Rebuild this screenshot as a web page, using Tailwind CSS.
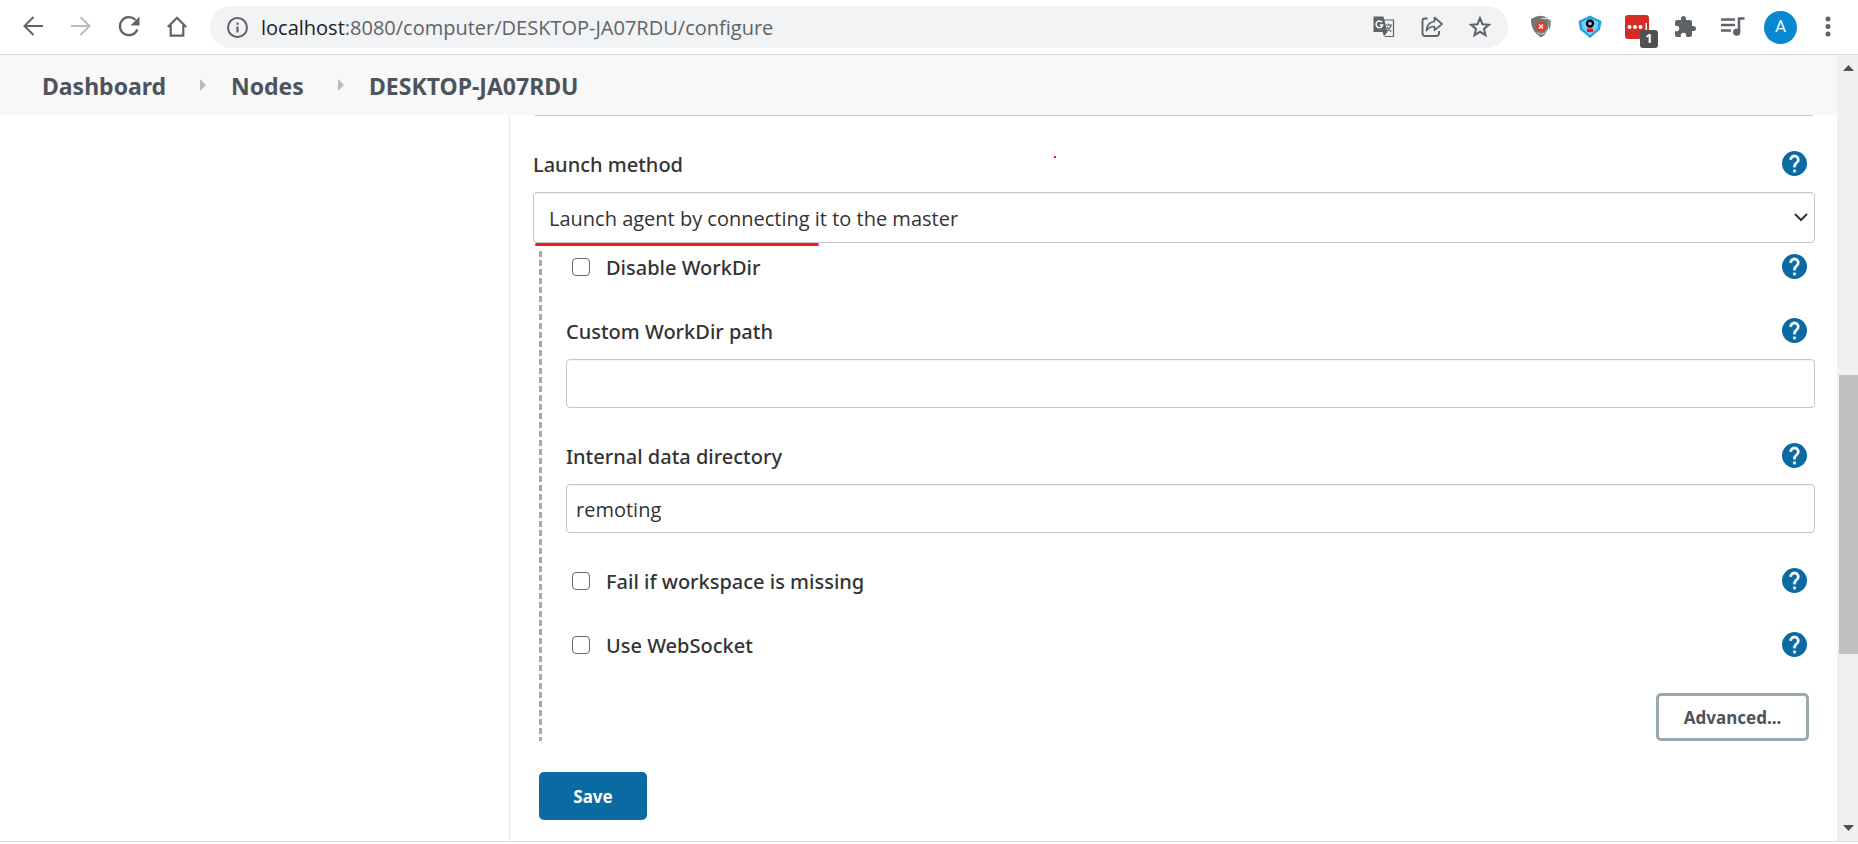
<!DOCTYPE html>
<html lang="en">
<head>
<meta charset="utf-8">
<meta name="viewport" content="width=device-width, initial-scale=1">
<title>DESKTOP-JA07RDU configuration</title>
<script src="https://cdn.jsdelivr.net/npm/@tailwindcss/browser@4"></script>
</head>
<body class="flex h-screen flex-col overflow-hidden bg-white font-['Noto_Sans',sans-serif] text-[20px] text-[#333]">
<svg class="hidden">
  <symbol id="help" viewBox="2 2 20 20">
    <circle cx="12" cy="12" r="10" fill="#0b6aa2"/>
    <path d="M13 19h-2v-2h2v2zm2.070-7.750l-.9.920C13.450 12.900 13 13.500 13 15h-2v-.5c0-1.100.450-2.100 1.170-2.830l1.240-1.260c.370-.360.590-.860.590-1.410 0-1.100-.9-2-2-2s-2 .9-2 2H8c0-2.210 1.790-4 4-4s4 1.790 4 4c0 .880-.360 1.680-.930 2.250z" fill="#fff" stroke="#fff" stroke-width=".2"/>
  </symbol>
  <symbol id="crumb" viewBox="0 0 6 12"><path d="M0 0l6 6-6 6z" fill="#bbb"/></symbol>
</svg>

<header class="flex h-[55px] shrink-0 items-start border-b border-[#d8d9db] bg-white pt-[6px] text-[#5f6368]">
  <nav class="flex h-[42px] w-[210px] shrink-0 items-center gap-6 pl-[21px]" aria-label="Browser">
    <button aria-label="Back"><svg class="size-6" viewBox="0 0 24 24" fill="none" stroke="currentColor" stroke-width="2"><path d="M22 11H4M12.500 2L3.500 11l9 9"/></svg></button>
    <button aria-label="Forward" class="text-[#babcbe]"><svg class="size-6" viewBox="0 0 24 24" fill="none" stroke="currentColor" stroke-width="2"><path d="M2 11h18M11.500 2l9 9-9 9"/></svg></button>
    <button aria-label="Reload"><svg class="size-6" viewBox="0 0 24 24"><path d="M20.300 14.500a9 9 0 1 1-1.900-9.600" fill="none" stroke="currentColor" stroke-width="2.300"/><path d="M22.500 1.500v9h-9z" fill="currentColor"/></svg></button>
    <button aria-label="Home"><svg class="size-6" viewBox="0 0 24 24" fill="none" stroke="currentColor" stroke-width="2.200"><path d="M2.800 12L12 2.800l9.200 9.200M5.700 10v10.600h12.600V10"/></svg></button>
  </nav>
  <div class="flex h-[42px] flex-1 items-center rounded-full bg-[#f1f3f4] px-4">
    <svg class="mr-3 size-[23px] shrink-0" viewBox="0 0 23 23"><circle cx="11.500" cy="11.500" r="9.500" fill="none" stroke="currentColor" stroke-width="2"/><path d="M10.400 10.500h2.200v6h-2.200zM10.400 6.500h2.200v2.200h-2.200z" fill="currentColor"/></svg>
    <a href="#" class="flex-1 pt-[2px] font-['Open_Sans',sans-serif] text-[20px] whitespace-nowrap"><span class="text-[#202124]">localhost</span>:8080/computer/DESKTOP-JA07RDU/configure</a>
    <div class="flex items-center gap-6">
      <button aria-label="Translate"><svg class="size-6" viewBox="0 0 24 24"><path d="M11 5h10.500v16.500H13" fill="none" stroke="currentColor" stroke-width="1.200"/><path d="M1.500 1.500h10L15.500 17h-14z" fill="currentColor"/><path d="M12 21.500L10.500 17h5z" fill="currentColor"/><path d="M10 7.400a3.300 3.300 0 1 0 .6 2.700H7.800" fill="none" stroke="#fff" stroke-width="1.500"/><path d="M13.500 10h6.500M16.700 8.500V10M19 10c-.6 3-2.500 5-4.500 6.300M14.800 12c1 2 2.500 3.600 4.500 4.600" fill="none" stroke="currentColor" stroke-width="1.200"/></svg></button>
      <button aria-label="Share"><svg class="size-6" viewBox="0 0 24 24" fill="none" stroke="currentColor" stroke-width="1.900"><path d="M7.500 3.500H5A2.500 2.500 0 0 0 2.500 6v12.500A2.500 2.500 0 0 0 5 21h11.500a2.500 2.500 0 0 0 2.500-2.500V16"/><path d="M14.500 2.500L22 9l-7.500 6.300v-3.800c-3.500 0-6 1.200-8 4 .4-5 3.300-8.500 8-9z" stroke-width="1.700" stroke-linejoin="round"/></svg></button>
      <button aria-label="Bookmark"><svg class="size-6" viewBox="0 0 24 24" fill="none" stroke="currentColor" stroke-width="2"><path d="M12 3.200l2.500 6 6.400.5-4.900 4.200 1.500 6.300-5.500-3.400-5.500 3.400L8 13.900 3.100 9.700l6.400-.5z"/></svg></button>
    </div>
  </div>
  <div class="flex h-[42px] w-[350px] shrink-0 items-center pl-[22px]">
    <button aria-label="Shield extension" class="mr-6"><svg class="size-6" viewBox="0 0 24 24"><path d="M1 4Q11-2 18 3.500q-5-1-8 .5 7-1.500 9 3Q19 18 11 22.500 2 17 1 7z" fill="#757575"/><path d="M16 3.500q5 .5 5 3.500 0 5-2 8.500.5-8-3-12z" fill="#8a8a8a"/><path d="M7 17.500q5 4 10-2" fill="none" stroke="#ddd"/><circle cx="11" cy="11.500" r="4.700" fill="#f4361e"/><path d="M9 9.500l4 4m0-4l-4 4" stroke="#fff" stroke-width="1.500"/></svg></button>
    <button aria-label="Tag extension" class="mr-[23px]"><svg class="size-6" viewBox="0 0 24 24"><path d="M12 .5l5 2.500 6.500 3-1.500 8.500-10 8.500-10-8.500L.5 6 7 3z" fill="#1ba1e2"/><path d="M12 3l8.500 4-1 6.500L12 20.500 4.500 13.500l-1-6.500z" fill="#7ccbf2"/><circle cx="12" cy="8.500" r="3" fill="#7ccbf2" stroke="#000" stroke-width="2.300"/><path d="M9 13.500h6V17H9z" fill="#f11"/></svg></button>
    <button aria-label="Password extension, 1 notice" class="relative mr-6"><svg class="size-6" viewBox="0 0 24 24"><rect width="24" height="24" rx="3" fill="#d32d27"/><g fill="#fff"><circle cx="4.500" cy="12" r="2"/><circle cx="10" cy="12" r="2"/><circle cx="15.500" cy="12" r="2"/><rect x="20.500" y="8" width="1.500" height="8"/></g></svg><span class="absolute top-[15px] left-[15px] flex h-[18px] w-[18px] items-center justify-center rounded-[3px] bg-[#505050] text-[13px] font-bold text-white">1</span></button>
    <button aria-label="Extensions" class="mr-[23px]"><svg class="size-6" viewBox="0 0 24 24"><path d="M20.500 11H19V7a2 2 0 0 0-2-2h-4V3.500a2.500 2.500 0 0 0-5 0V5H4a2 2 0 0 0-2 2v3.800h1.500a2.700 2.700 0 0 1 0 5.400H2V20a2 2 0 0 0 2 2h3.800v-1.500a2.700 2.700 0 0 1 5.400 0V22H17a2 2 0 0 0 2-2v-4h1.500a2.500 2.500 0 0 0 0-5z" fill="currentColor"/></svg></button>
    <button aria-label="Media" class="mr-[18px]"><svg class="size-[26px]" viewBox="0 0 26 26"><path d="M1 5.500h14M1 11h14M1 16.500h10" stroke="currentColor" stroke-width="2.300"/><path d="M19 18V4.500h5.500" fill="none" stroke="currentColor" stroke-width="2.600"/><circle cx="16.700" cy="18.200" r="3.600" fill="currentColor"/></svg></button>
    <button aria-label="Account" class="mr-[19px] flex size-[33px] items-center justify-center rounded-full bg-[#0788d1] font-['Roboto',sans-serif] text-[17px] text-white">A</button>
    <button aria-label="Menu"><svg class="size-6" viewBox="0 0 24 24" fill="currentColor"><circle cx="12" cy="4" r="2.500"/><circle cx="12" cy="11.500" r="2.500"/><circle cx="12" cy="19" r="2.500"/></svg></button>
  </div>
</header>

<div class="flex min-h-0 flex-1 border-b border-[#ddd]">
  <div class="flex min-w-0 flex-1 flex-col">
    <nav class="flex h-[60px] shrink-0 items-center bg-[#f8f8f8] pl-[42px] text-[23px] font-bold text-[#4d545d]" aria-label="Breadcrumb">
      <a href="#" class="w-[158px] pt-[2px]">Dashboard</a>
      <svg class="mr-[25px] h-3 w-[6px]"><use href="#crumb"/></svg>
      <a href="#" class="w-[107px] pt-[2px]">Nodes</a>
      <svg class="mr-[25px] h-3 w-[6px]"><use href="#crumb"/></svg>
      <a href="#" class="pt-[2px]">DESKTOP-JA07RDU</a>
    </nav>
    <div class="flex min-h-0 flex-1">
      <aside class="w-[510px] shrink-0 border-r border-[#eaeaea]"></aside>
      <main class="relative min-w-0 flex-1 pr-[22px] pl-[23px]">
        <div class="mr-[2px] ml-[2px] border-t border-[#c8c8c8]"></div>
        <span class="absolute top-[41px] left-[544px] size-[2px] bg-[#e02020]"></span>
        <form>
          <div class="mt-8 mb-3 flex h-8 items-center justify-between pr-2 font-medium">
            <label for="launch" class="pt-[2px]">Launch method</label>
            <button type="button" class="pb-[2px]" aria-label="Help for launch method"><svg class="size-[25px]"><use href="#help"/></svg></button>
          </div>
          <div class="relative">
            <select id="launch" class="block h-[51px] w-full appearance-none rounded-[4px] border border-[#c6c6c6] bg-white px-[15px] pt-[2px] font-['Open_Sans',sans-serif] inset-shadow-xs"><option>Launch agent by connecting it to the master</option></select>
            <svg class="pointer-events-none absolute top-[21px] right-[7px] h-[9px] w-[14px]" viewBox="0 0 14 9"><path d="M1 1l6 6 6-6" fill="none" stroke="#333" stroke-width="2"/></svg>
            <span class="absolute top-full left-[2px] h-[3px] w-[284px] rounded-full bg-[#ee1c23]"></span>
          </div>
          <div class="mt-2 ml-[6px] flex">
            <div class="w-[3px] bg-[repeating-linear-gradient(to_bottom,#aaa_0_6px,transparent_6px_9px)]"></div>
            <div class="ml-6 flex flex-1 flex-col gap-8">
              <div class="flex h-8 items-center pr-2 pl-[6px] font-medium">
                <input id="disable" type="checkbox" class="mr-4 size-[18px] appearance-none rounded-[4px] border border-[#666]">
                <label for="disable" class="flex-1 pt-[2px]">Disable WorkDir</label>
                <button type="button" class="pb-[2px]" aria-label="Help for Disable WorkDir"><svg class="size-[25px]"><use href="#help"/></svg></button>
              </div>
              <div>
                <div class="mb-3 flex h-8 items-center justify-between pr-2 font-medium">
                  <label for="path" class="pt-[2px]">Custom WorkDir path</label>
                  <button type="button" class="pb-[2px]" aria-label="Help for custom path"><svg class="size-[25px]"><use href="#help"/></svg></button>
                </div>
                <input id="path" type="text" class="block h-[49px] w-full rounded-[4px] border border-[#c6c6c6] px-[9px] pt-[2px] font-['Open_Sans',sans-serif] inset-shadow-xs">
              </div>
              <div>
                <div class="mb-3 flex h-8 items-center justify-between pr-2 font-medium">
                  <label for="data" class="pt-[2px]">Internal data directory</label>
                  <button type="button" class="pb-[2px]" aria-label="Help for data directory"><svg class="size-[25px]"><use href="#help"/></svg></button>
                </div>
                <input id="data" type="text" value="remoting" class="block h-[49px] w-full rounded-[4px] border border-[#c6c6c6] px-[9px] pt-[2px] font-['Open_Sans',sans-serif] inset-shadow-xs">
              </div>
              <div class="flex h-8 items-center pr-2 pl-[6px] font-medium">
                <input id="fail" type="checkbox" class="mr-4 size-[18px] appearance-none rounded-[4px] border border-[#666]">
                <label for="fail" class="flex-1 pt-[2px]">Fail if workspace is missing</label>
                <button type="button" class="pb-[2px]" aria-label="Help for missing workspace"><svg class="size-[25px]"><use href="#help"/></svg></button>
              </div>
              <div class="flex h-8 items-center pr-2 pl-[6px] font-medium">
                <input id="socket" type="checkbox" class="mr-4 size-[18px] appearance-none rounded-[4px] border border-[#666]">
                <label for="socket" class="flex-1 pt-[2px]">Use WebSocket</label>
                <button type="button" class="pb-[2px]" aria-label="Help for WebSocket"><svg class="size-[25px]"><use href="#help"/></svg></button>
              </div>
              <button type="button" class="mr-[6px] h-12 w-[153px] self-end rounded-[5px] border-3 border-[#9aa8b0] pt-[2px] text-[17px] font-bold text-[#4d545d]">Advanced...</button>
            </div>
          </div>
          <button type="submit" class="mt-[31px] ml-[6px] h-12 w-[108px] rounded-[5px] bg-[#0b6aa2] pt-[2px] text-[17px] font-bold text-white">Save</button>
        </form>
      </main>
    </div>
  </div>
  <div class="flex w-[21px] shrink-0 flex-col items-end bg-[#f0f0f0] py-[10px]" aria-hidden="true">
    <svg class="mr-1 h-[6px] w-[11px]" viewBox="0 0 11 6"><path d="M0 6l5.500-6L11 6z" fill="#505050"/></svg>
    <div class="flex-304"></div>
    <div class="w-[19px] flex-279 bg-[#c1c1c1]"></div>
    <div class="flex-171"></div>
    <svg class="mr-1 h-[6px] w-[11px]" viewBox="0 0 11 6"><path d="M0 0l5.500 6L11 0z" fill="#505050"/></svg>
  </div>
</div>
<div class="h-[2px] shrink-0 bg-white"></div>
</body>
</html>
